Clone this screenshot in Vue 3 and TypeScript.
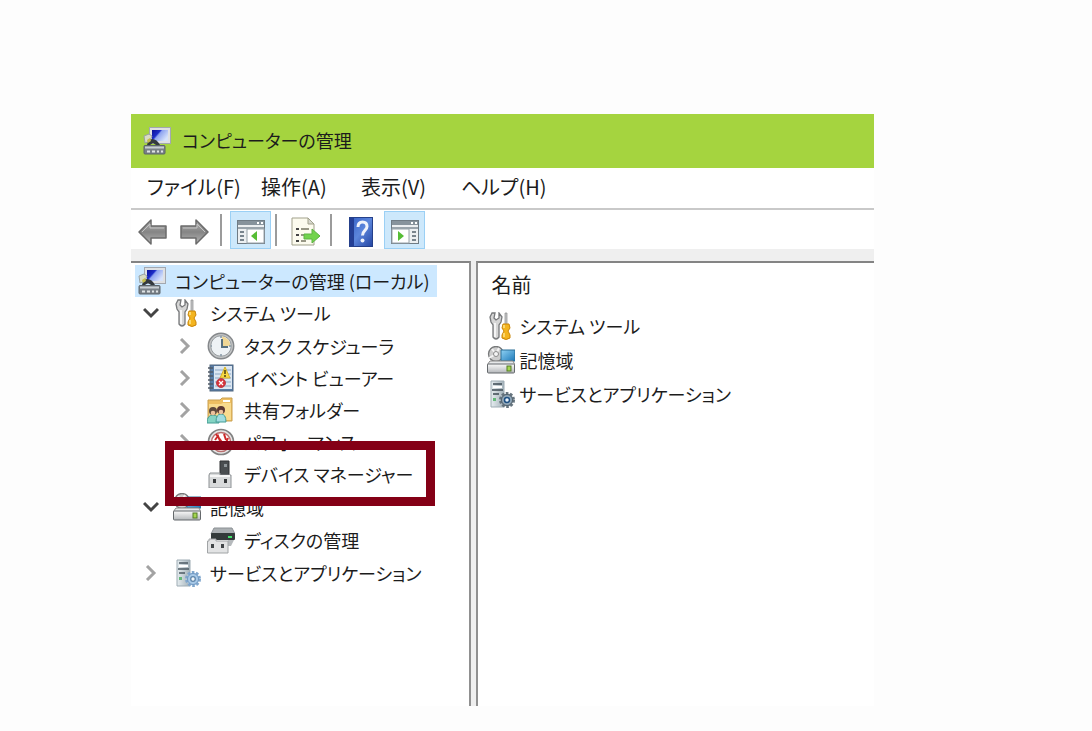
<script setup lang="ts">
import { ref } from 'vue'

interface Leaf {
  label: string
  icon: string
  expandable: boolean
  marked?: boolean
}
interface Group {
  label: string
  icon: string
  open: boolean
  children: Leaf[]
}

const menus: { label: string; size: string }[] = [
  { label: 'ファイル(F)', size: 'wide' },
  { label: '操作(A)', size: 'mid' },
  { label: '表示(V)', size: 'mid' },
  { label: 'ヘルプ(H)', size: 'wide' },
]

const groups = ref<Group[]>([
  {
    label: 'システム ツール',
    icon: 'tools',
    open: true,
    children: [
      { label: 'タスク スケジューラ', icon: 'clock', expandable: true },
      { label: 'イベント ビューアー', icon: 'event', expandable: true },
      { label: '共有フォルダー', icon: 'folder', expandable: true },
      { label: 'パフォーマンス', icon: 'perf', expandable: true },
      { label: 'デバイス マネージャー', icon: 'device', expandable: false, marked: true },
    ],
  },
  {
    label: '記憶域',
    icon: 'storage',
    open: true,
    children: [{ label: 'ディスクの管理', icon: 'disk', expandable: false }],
  },
  { label: 'サービスとアプリケーション', icon: 'services', open: false, children: [] },
])
</script>

<template>
  <svg class="defs" aria-hidden="true">
    <defs>
      <linearGradient id="gScreen" x1="0" y1="0" x2="1" y2=".6">
        <stop offset="0" stop-color="#0a0f96" /><stop offset=".4" stop-color="#1c2cc8" /><stop offset=".5" stop-color="#8ea4f0" /><stop offset="1" stop-color="#d6e2fb" />
      </linearGradient>
      <linearGradient id="gMetal" x1="0" y1="0" x2="0" y2="1">
        <stop offset="0" stop-color="#fafafa" /><stop offset="1" stop-color="#b4b7ba" />
      </linearGradient>
      <linearGradient id="gArrow" x1="0" y1="0" x2="0" y2="1">
        <stop offset="0" stop-color="#b2b2b2" /><stop offset=".5" stop-color="#858585" /><stop offset="1" stop-color="#b5b5b5" />
      </linearGradient>
      <linearGradient id="gTower" x1="0" y1="0" x2="1" y2="0">
        <stop offset="0" stop-color="#e6edf0" /><stop offset="1" stop-color="#a3b1b9" />
      </linearGradient>
      <linearGradient id="gHelp" x1="0" y1="0" x2="1" y2="1">
        <stop offset="0" stop-color="#3460c4" /><stop offset=".5" stop-color="#5c86dc" /><stop offset="1" stop-color="#2445a2" />
      </linearGradient>
      <linearGradient id="gBlue" x1="0" y1="0" x2="1" y2="1">
        <stop offset="0" stop-color="#8fd2f4" /><stop offset="1" stop-color="#1c78b8" />
      </linearGradient>
    </defs>
    <symbol id="i-pc" viewBox="0 0 28 28">
      <rect x="6.500" y=".500" width="21" height="16" fill="#dfe1e4" stroke="#a3a8b0" />
      <rect x="9" y="3" width="16" height="11" fill="url(#gScreen)" />
      <path d="M1 9l5-2 3 2-2 5-5 2z" fill="#d9dcc4" stroke="#9aa2a4" />
      <path d="M4 18q1-5 5-6 5 0 8 6h-4l-3-2-3 2z" fill="#33383d" />
      <path d="M4 13l3-2 1 3-3 2z" fill="#c6bd49" />
      <rect x="1" y="18.500" width="21" height="8.500" rx="1" fill="#798087" stroke="#5c646a" />
      <path d="M2 20.500h19" stroke="#c8ced2" stroke-width="2" />
      <path d="M4 24.500h3M9 24.500h3M14 24.500h2M18 24.500h2" stroke="#dfe3e5" stroke-width="2" />
    </symbol>
    <symbol id="i-tools" viewBox="0 0 28 28">
      <path d="M5 1L3 5l1 5 2 3v12q3 4 6 0V13l2-3 1-5-3-4v5L9 8 7 6 8 1z" fill="#d6d6d6" stroke="#77797b" stroke-width="1.300" />
      <path d="M8 11v14" stroke="#fff" stroke-width="1.500" />
      <path d="M18 1h2v12h-2z" fill="#c7c8c9" stroke="#8a8a8a" stroke-width=".700" />
      <path d="M16 12h6l1 4-2 3 2 4v3q-4 3-8 0v-3l2-4-2-3z" fill="#f3b41f" stroke="#ca8508" />
      <path d="M17 13v3M17 21v4" stroke="#ffe48a" stroke-width="1.500" />
    </symbol>
    <symbol id="i-clock" viewBox="0 0 28 28">
      <circle cx="14" cy="14" r="12.700" fill="#c3c5c6" stroke="#85888b" stroke-width="1.500" />
      <circle cx="14" cy="14" r="10.300" fill="#eef2f5" stroke="#989da1" />
      <path d="M15 4.500a9.500 9.500 0 0 1 8.500 9.500H15z" fill="#f0d795" />
      <path d="M15 7v8h6" fill="none" stroke="#58707f" stroke-width="2" />
      <path d="M14 22v2M5 14H4M14 4v2M24 14h-2" stroke="#8295a2" stroke-width="1.500" />
    </symbol>
    <symbol id="i-event" viewBox="0 0 28 28">
      <rect x="3" y="1" width="23" height="26" fill="#577da8" stroke="#50677f" />
      <rect x="7" y="2" width="18" height="23" fill="#dce7f2" />
      <path d="M8 6h16M8 10h16M8 14h16M8 18h16M8 22h16" stroke="#8ba7c6" />
      <path d="M1 4h5M1 8h5M1 12h5M1 16h5M1 20h5M1 24h5" stroke="#505a65" stroke-width="1.500" />
      <path d="M18 3l5 11H13z" fill="#f8d943" stroke="#d3b02a" />
      <path d="M18 6v4M18 11v2" stroke="#483e10" stroke-width="1.500" />
      <circle cx="14" cy="19" r="4.500" fill="#d7323b" stroke="#b8414c" />
      <path d="M12 17l4 4M16 17l-4 4" stroke="#fff" stroke-width="1.300" />
    </symbol>
    <symbol id="i-folder" viewBox="0 0 28 28">
      <path d="M1 4h12l2-2h10v23H1z" fill="#eebf62" stroke="#c9a050" />
      <path d="M16 4h7v2h-7z" fill="#fff" />
      <path d="M2 8h12l2-1h8v17H2z" fill="#f9db8e" />
      <path d="M0 27q0-8 6-8t6 8z" fill="#84d4c3" stroke="#449d94" />
      <path d="M9 26q0-8 5-8t5 8z" fill="#a1dce0" stroke="#449d94" />
      <circle cx="6" cy="15" r="4" fill="#5f4a3c" /><circle cx="6" cy="17" r="2.300" fill="#ecc29d" />
      <circle cx="14" cy="14" r="4" fill="#5c3732" /><circle cx="14" cy="16" r="2.300" fill="#ecc29d" />
    </symbol>
    <symbol id="i-perf" viewBox="0 0 28 28">
      <circle cx="14" cy="14" r="12.500" fill="#e6e6e6" stroke="#828282" stroke-width="1.700" />
      <circle cx="14" cy="14" r="9.500" fill="#fff" stroke="#ba7070" stroke-width="1.500" />
      <path d="M9 6l8 11M8 12l3-4 2 5M17 6l2 6M21 10l-2 5" fill="none" stroke="#cf2929" stroke-width="2" />
    </symbol>
    <symbol id="i-device" viewBox="0 0 28 28">
      <path d="M13 1h9v14h-9z" fill="#494d50" stroke="#303335" />
      <path d="M17 4h3v3h-3z" fill="#8e9599" />
      <path d="M3 13h10v2h11v13H2V15z" fill="#d8dadb" stroke="#8d9194" />
      <path d="M3 16h20" stroke="#f6f6f6" stroke-width="2" />
      <path d="M6 19h3v4H6zM17 19h3v4h-3z" fill="#36393b" />
    </symbol>
    <symbol id="i-storage" viewBox="0 0 28 28">
      <circle cx="9" cy="8" r="7.500" fill="#cdcdcd" stroke="#77797a" stroke-width="1.300" />
      <path d="M5 3l4 5 3-6M9 8l-7 4" stroke="#f4f4f4" stroke-width="2" fill="none" />
      <circle cx="9" cy="8" r="2.500" fill="#f5f5f5" stroke="#8a8a8a" />
      <path d="M14 4h14v11H14z" fill="url(#gBlue)" stroke="#2b6e97" />
      <path d="M3 15h23l2 4H0z" fill="#e6e8e9" stroke="#888" />
      <rect x=".500" y="18" width="27" height="9" rx="1" fill="url(#gMetal)" stroke="#65696c" />
      <rect x="20" y="20" width="4" height="5" fill="#a4d650" stroke="#527b24" />
    </symbol>
    <symbol id="i-disk" viewBox="0 0 28 28">
      <path d="M7 2h18l3 6H4z" fill="#abb0b3" stroke="#8b9094" />
      <rect x="4" y="7" width="24" height="7" rx="1" fill="#343b3b" />
      <rect x="21" y="10" width="4" height="2" fill="#43e36c" />
      <path d="M21 14h6l-3 6h-3z" fill="#b5b9bc" />
      <path d="M2 13h7v2h12v12H.500V15H2z" fill="#e2e3e4" stroke="#a1a4a6" />
      <path d="M4 18h3v4H4zM14 18h3v4h-3z" fill="#414548" />
    </symbol>
    <symbol id="i-services" viewBox="0 0 28 28">
      <path d="M4 1h13v26H4z" fill="url(#gTower)" stroke="#9eacb4" />
      <path d="M6 4h9M5 10h11M6 14h6" stroke="#4c5a63" stroke-width="1.500" />
      <path d="M6 7h9" stroke="#fff" stroke-width="2" />
      <rect x="6" y="18" width="3" height="3" fill="#63b979" />
      <circle cx="20" cy="20" r="6.500" fill="#b8d5ef" stroke="#7fa6cd" stroke-width="3" stroke-dasharray="2.500 1.600" />
      <circle cx="20" cy="20" r="5.500" fill="#a7c9e8" stroke="#7298c0" />
      <circle cx="20" cy="20" r="2.300" fill="#f2f6f9" stroke="#6086ab" stroke-width="1.300" />
    </symbol>
    <symbol id="i-services-dark" viewBox="0 0 28 28">
      <path d="M4 1h13v26H4z" fill="url(#gTower)" stroke="#9eacb4" />
      <path d="M6 4h9M5 10h11M6 14h6" stroke="#3c4a53" stroke-width="1.500" />
      <path d="M6 7h9" stroke="#fff" stroke-width="2" />
      <rect x="6" y="18" width="3" height="3" fill="#63b979" />
      <circle cx="20" cy="20" r="6.500" fill="#8596a2" stroke="#65737d" stroke-width="3" stroke-dasharray="2.500 1.600" />
      <circle cx="20" cy="20" r="5.500" fill="#92a8b9" stroke="#52616c" />
      <circle cx="20" cy="20" r="2.500" fill="#e8f2fb" stroke="#1d4f82" stroke-width="1.500" />
    </symbol>
    <symbol id="i-arrow" viewBox="0 0 30 28">
      <path d="M1 14L13 2v6h15v12H13v6z" fill="url(#gArrow)" stroke="#6b6b6b" stroke-width="1.500" stroke-linejoin="round" />
      <path d="M4 14l8-8v4h14" fill="none" stroke="#c4c4c4" />
    </symbol>
    <symbol id="i-pane-left" viewBox="0 0 28 24">
      <rect x=".500" y=".500" width="27" height="23" fill="#eceff1" stroke="#6f7b84" />
      <path d="M1 1h26v4H1z" fill="#87939c" /><path d="M20 2h2v2h-2zM24 2h2v2h-2z" fill="#fff" />
      <path d="M1 8h26" stroke="#7f8b94" stroke-width="1.500" />
      <rect x="10" y="9" width="17" height="14" fill="#fff" stroke="#98a3aa" />
      <path d="M3 12h4M3 16h4M3 20h4" stroke="#53616c" stroke-width="1.500" />
      <path d="M20 11v10l-6-5z" fill="#56bd35" />
    </symbol>
    <symbol id="i-pane-right" viewBox="0 0 28 24">
      <rect x=".500" y=".500" width="27" height="23" fill="#eceff1" stroke="#6f7b84" />
      <path d="M1 1h26v4H1z" fill="#87939c" /><path d="M20 2h2v2h-2zM24 2h2v2h-2z" fill="#fff" />
      <path d="M1 8h26" stroke="#7f8b94" stroke-width="1.500" />
      <rect x="1" y="9" width="17" height="14" fill="#fff" stroke="#98a3aa" />
      <path d="M21 12h4M21 16h4M21 20h4" stroke="#53616c" stroke-width="1.500" />
      <path d="M7 11v10l6-5z" fill="#56bd35" />
    </symbol>
    <symbol id="i-export" viewBox="0 0 30 30">
      <path d="M1 1h16l6 6v21H1z" fill="#fcfbee" stroke="#a1a18b" />
      <path d="M17 1v6h6z" fill="#d8d8ce" stroke="#a1a18b" />
      <path d="M5 12h3M5 18h3M5 24h3" stroke="#444" stroke-width="2" /><path d="M10 12h8M10 18h4M10 24h5" stroke="#777763" stroke-width="1.500" />
      <path d="M13 17h8v-5l8 7-8 7v-4h-8z" fill="#72d34d" stroke="#5cb443" />
    </symbol>
    <symbol id="i-help" viewBox="0 0 24 30">
      <rect x=".500" y=".500" width="23" height="29" fill="url(#gHelp)" stroke="#25408a" />
      <path d="M1 1h4v28H1z" fill="#243f95" />
      <path d="M9 10q0-5 4.500-5T18 9.500c0 4-4.500 4-4.500 9" fill="none" stroke="#f0f3fb" stroke-width="3" />
      <circle cx="13.500" cy="23.500" r="2" fill="#f0f3fb" />
    </symbol>
  </svg>

  <main class="page">
    <section class="window">
      <header class="title">
        <svg class="icon"><use href="#i-pc" /></svg>
        <h1>コンピューターの管理</h1>
      </header>

      <nav class="menu">
        <button v-for="m in menus" :key="m.label" type="button" :class="m.size">{{ m.label }}</button>
      </nav>

      <div class="toolbar">
        <button type="button" class="nav-btn" aria-label="戻る"><svg class="arrow"><use href="#i-arrow" /></svg></button>
        <button type="button" class="nav-btn" aria-label="進む"><svg class="arrow forward"><use href="#i-arrow" /></svg></button>
        <span class="sep"></span>
        <button type="button" class="tool on" aria-label="コンソール ツリー" aria-pressed="true"><svg class="pane-icon"><use href="#i-pane-left" /></svg></button>
        <span class="sep"></span>
        <button type="button" class="tool" aria-label="一覧のエクスポート"><svg class="export"><use href="#i-export" /></svg></button>
        <span class="sep"></span>
        <button type="button" class="tool help-btn" aria-label="ヘルプ"><svg class="help"><use href="#i-help" /></svg></button>
        <button type="button" class="tool on" aria-label="操作ウィンドウ" aria-pressed="true"><svg class="pane-icon"><use href="#i-pane-right" /></svg></button>
      </div>

      <div class="panes">
        <div class="tree">
          <div class="row root">
            <svg class="icon"><use href="#i-pc" /></svg>
            <span class="label">コンピューターの管理 (ローカル)</span>
          </div>
          <ul>
            <li v-for="g in groups" :key="g.label">
              <div class="row">
                <button type="button" class="toggle" :class="{ open: g.open }" :aria-expanded="g.open" :aria-label="g.label" @click="g.open = !g.open">
                  <svg viewBox="0 0 16 16"><path d="M4 1l7 7-7 7" /></svg>
                </button>
                <svg class="icon"><use :href="'#i-' + g.icon" /></svg>
                <span class="label">{{ g.label }}</span>
              </div>
              <ul v-if="g.open" class="children">
                <li v-for="c in g.children" :key="c.label" class="row" :class="{ marked: c.marked }">
                  <button v-if="c.expandable" type="button" class="toggle" :aria-label="c.label">
                    <svg viewBox="0 0 16 16"><path d="M4 1l7 7-7 7" /></svg>
                  </button>
                  <span v-else class="toggle"></span>
                  <svg class="icon"><use :href="'#i-' + c.icon" /></svg>
                  <span class="label">{{ c.label }}</span>
                </li>
              </ul>
            </li>
          </ul>
        </div>

        <div class="list">
          <h2>名前</h2>
          <ul>
            <li><svg class="icon"><use href="#i-tools" /></svg>システム ツール</li>
            <li><svg class="icon"><use href="#i-storage" /></svg>記憶域</li>
            <li><svg class="icon"><use href="#i-services-dark" /></svg>サービスとアプリケーション</li>
          </ul>
        </div>
      </div>
    </section>
  </main>
</template>

<style>
body {
  margin: 0;
  background: #fdfdfd;
}
</style>

<style scoped>
.defs {
  position: absolute;
  width: 0;
  height: 0;
}
.page {
  box-sizing: border-box;
  display: flex;
  min-height: 100vh;
  padding: 114px 20% 25px 12%;
  background: #fdfdfd;
  color: #1c1c1c;
  font: 18px/32px "Noto Sans CJK JP", sans-serif;
  font-feature-settings: "palt";
  white-space: nowrap;
}
h1,
h2,
ul {
  margin: 0;
  padding: 0;
  font: inherit;
  list-style: none;
}
button {
  padding: 0;
  border: 0;
  background: none;
  color: inherit;
  font: inherit;
  font-feature-settings: inherit;
}
.window {
  flex: 1;
  display: flex;
  flex-direction: column;
  min-width: 0;
  background: #fff;
}
.icon {
  flex: none;
  width: 28px;
  height: 28px;
}
.title {
  display: flex;
  align-items: center;
  gap: 11px;
  height: 54px;
  padding: 0 12px;
  background: #a5d43f;
}
.title h1 {
  padding-bottom: 2px;
}
.menu {
  display: flex;
  height: 40px;
  padding-left: 16px;
  border-bottom: 2px solid #c9c9c9;
}
.menu button {
  padding-bottom: 2px;
  font-size: 20px;
  text-align: left;
}
.menu .wide {
  width: 114px;
}
.menu .mid {
  width: 100px;
}
.toolbar {
  display: flex;
  align-items: center;
  height: 39px;
  padding-left: 7px;
}
.toolbar button {
  box-sizing: border-box;
  display: flex;
  align-items: center;
  justify-content: center;
  height: 38px;
  padding-top: 4px;
}
.nav-btn {
  width: 30px;
  margin-right: 11px;
}
.arrow {
  width: 30px;
  height: 28px;
}
.forward {
  transform: scaleX(-1);
}
.sep {
  width: 2px;
  height: 32px;
  margin-right: 8px;
  background: #9b9b9b;
}
.tool {
  width: 41px;
}
.tool.on {
  border: 1px solid #9bd0f5;
  background: #cde8fb;
}
.tool + .sep {
  margin-left: 4px;
}
.help-btn {
  margin-right: 3px;
}
.pane-icon {
  width: 28px;
  height: 24px;
}
.export {
  width: 30px;
  height: 30px;
}
.help {
  width: 24px;
  height: 30px;
}
.panes {
  flex: 1;
  display: grid;
  grid-template-columns: 6fr 7fr;
  column-gap: 5px;
  padding-top: 12px;
  background: #efefef;
}
.tree,
.list {
  min-width: 0;
  border-top: 2px solid #848484;
  background: #fff;
}
.tree {
  padding: 2px 0 0 3px;
  border-right: 2px solid #909090;
}
.row {
  position: relative;
  display: flex;
  align-items: center;
  height: 32px;
}
.row .icon {
  margin: 0 9px 0 5px;
}
.root {
  width: max-content;
  padding-right: 7px;
  margin-left: 1px;
  background: #cce8ff;
}
.root .icon {
  margin-left: 3px;
}
.children {
  padding: 1px 0 1px 34px;
}
.toggle {
  display: flex;
  align-items: center;
  justify-content: center;
  width: 34px;
  height: 32px;
}
.toggle svg {
  width: 16px;
  height: 16px;
  fill: none;
  stroke: #a3a3a3;
  stroke-width: 3;
}
.toggle.open svg {
  stroke: #444;
  transform: rotate(90deg);
}
.marked::after {
  content: "";
  position: absolute;
  z-index: 1;
  top: -17px;
  left: -3px;
  box-sizing: border-box;
  width: 270px;
  height: 65px;
  border: 9px solid #840016;
}
.list {
  padding: 6px 0 0 9px;
  border-left: 2px solid #909090;
}
.list h2 {
  padding: 0 0 8px 4px;
  font-size: 20px;
}
.list li {
  display: flex;
  align-items: center;
  gap: 4px;
  height: 34px;
}
</style>
